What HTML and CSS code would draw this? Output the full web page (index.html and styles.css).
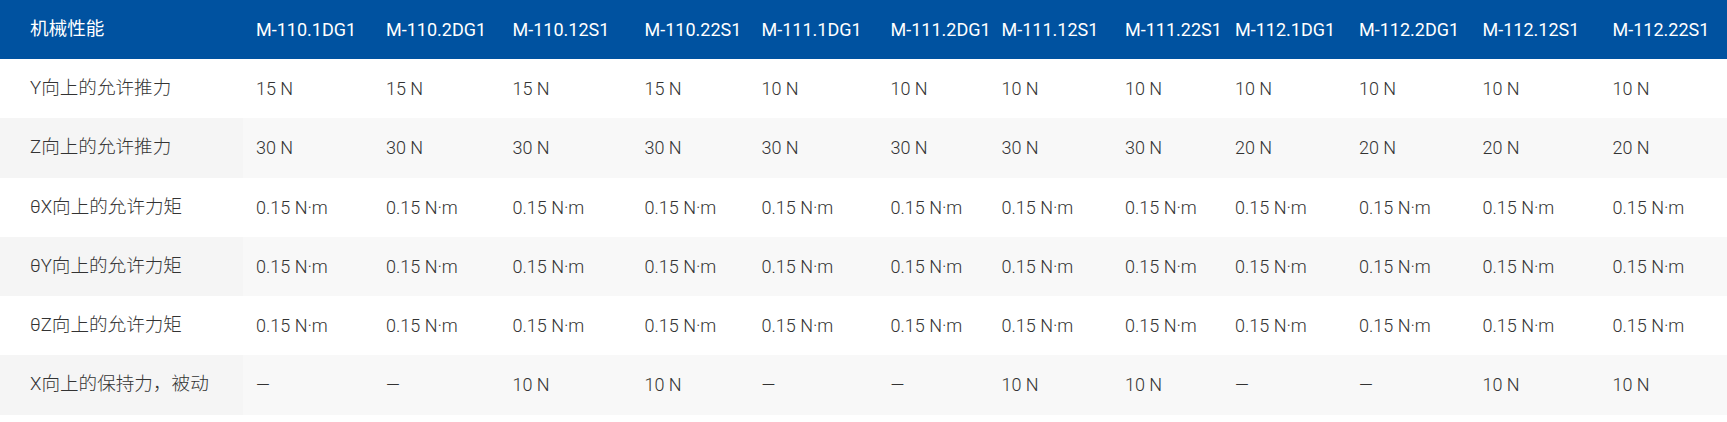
FILE: index.html
```html
<!DOCTYPE html>
<html lang="zh-CN">
<head>
<meta charset="utf-8">
<title>机械性能</title>
<link rel="stylesheet" href="styles.css">
</head>
<body>
<div class="spec-table" role="table">
  <div class="row head" role="row">
    <div class="cell label" role="columnheader">机械性能</div>
    <div class="cell" role="columnheader">M-110.1DG1</div>
    <div class="cell" role="columnheader">M-110.2DG1</div>
    <div class="cell" role="columnheader">M-110.12S1</div>
    <div class="cell" role="columnheader">M-110.22S1</div>
    <div class="cell" role="columnheader">M-111.1DG1</div>
    <div class="cell" role="columnheader">M-111.2DG1</div>
    <div class="cell" role="columnheader">M-111.12S1</div>
    <div class="cell" role="columnheader">M-111.22S1</div>
    <div class="cell" role="columnheader">M-112.1DG1</div>
    <div class="cell" role="columnheader">M-112.2DG1</div>
    <div class="cell" role="columnheader">M-112.12S1</div>
    <div class="cell" role="columnheader">M-112.22S1</div>
  </div>
  <div class="row" role="row">
    <div class="cell label" role="rowheader">Y向上的允许推力</div>
    <div class="cell" role="cell">15 N</div>
    <div class="cell" role="cell">15 N</div>
    <div class="cell" role="cell">15 N</div>
    <div class="cell" role="cell">15 N</div>
    <div class="cell" role="cell">10 N</div>
    <div class="cell" role="cell">10 N</div>
    <div class="cell" role="cell">10 N</div>
    <div class="cell" role="cell">10 N</div>
    <div class="cell" role="cell">10 N</div>
    <div class="cell" role="cell">10 N</div>
    <div class="cell" role="cell">10 N</div>
    <div class="cell" role="cell">10 N</div>
  </div>
  <div class="row alt" role="row">
    <div class="cell label" role="rowheader">Z向上的允许推力</div>
    <div class="cell" role="cell">30 N</div>
    <div class="cell" role="cell">30 N</div>
    <div class="cell" role="cell">30 N</div>
    <div class="cell" role="cell">30 N</div>
    <div class="cell" role="cell">30 N</div>
    <div class="cell" role="cell">30 N</div>
    <div class="cell" role="cell">30 N</div>
    <div class="cell" role="cell">30 N</div>
    <div class="cell" role="cell">20 N</div>
    <div class="cell" role="cell">20 N</div>
    <div class="cell" role="cell">20 N</div>
    <div class="cell" role="cell">20 N</div>
  </div>
  <div class="row" role="row">
    <div class="cell label" role="rowheader">θX向上的允许力矩</div>
    <div class="cell" role="cell">0.15 N·m</div>
    <div class="cell" role="cell">0.15 N·m</div>
    <div class="cell" role="cell">0.15 N·m</div>
    <div class="cell" role="cell">0.15 N·m</div>
    <div class="cell" role="cell">0.15 N·m</div>
    <div class="cell" role="cell">0.15 N·m</div>
    <div class="cell" role="cell">0.15 N·m</div>
    <div class="cell" role="cell">0.15 N·m</div>
    <div class="cell" role="cell">0.15 N·m</div>
    <div class="cell" role="cell">0.15 N·m</div>
    <div class="cell" role="cell">0.15 N·m</div>
    <div class="cell" role="cell">0.15 N·m</div>
  </div>
  <div class="row alt" role="row">
    <div class="cell label" role="rowheader">θY向上的允许力矩</div>
    <div class="cell" role="cell">0.15 N·m</div>
    <div class="cell" role="cell">0.15 N·m</div>
    <div class="cell" role="cell">0.15 N·m</div>
    <div class="cell" role="cell">0.15 N·m</div>
    <div class="cell" role="cell">0.15 N·m</div>
    <div class="cell" role="cell">0.15 N·m</div>
    <div class="cell" role="cell">0.15 N·m</div>
    <div class="cell" role="cell">0.15 N·m</div>
    <div class="cell" role="cell">0.15 N·m</div>
    <div class="cell" role="cell">0.15 N·m</div>
    <div class="cell" role="cell">0.15 N·m</div>
    <div class="cell" role="cell">0.15 N·m</div>
  </div>
  <div class="row" role="row">
    <div class="cell label" role="rowheader">θZ向上的允许力矩</div>
    <div class="cell" role="cell">0.15 N·m</div>
    <div class="cell" role="cell">0.15 N·m</div>
    <div class="cell" role="cell">0.15 N·m</div>
    <div class="cell" role="cell">0.15 N·m</div>
    <div class="cell" role="cell">0.15 N·m</div>
    <div class="cell" role="cell">0.15 N·m</div>
    <div class="cell" role="cell">0.15 N·m</div>
    <div class="cell" role="cell">0.15 N·m</div>
    <div class="cell" role="cell">0.15 N·m</div>
    <div class="cell" role="cell">0.15 N·m</div>
    <div class="cell" role="cell">0.15 N·m</div>
    <div class="cell" role="cell">0.15 N·m</div>
  </div>
  <div class="row alt" role="row">
    <div class="cell label" role="rowheader">X向上的保持力，被动</div>
    <div class="cell" role="cell">—</div>
    <div class="cell" role="cell">—</div>
    <div class="cell" role="cell">10 N</div>
    <div class="cell" role="cell">10 N</div>
    <div class="cell" role="cell">—</div>
    <div class="cell" role="cell">—</div>
    <div class="cell" role="cell">10 N</div>
    <div class="cell" role="cell">10 N</div>
    <div class="cell" role="cell">—</div>
    <div class="cell" role="cell">—</div>
    <div class="cell" role="cell">10 N</div>
    <div class="cell" role="cell">10 N</div>
  </div>
</div>
</body>
</html>
```
FILE: styles.css
```css
html, body {
  margin: 0;
  padding: 0;
  background: #ffffff;
}

body {
  font-family: Roboto, "Noto Sans CJK SC", "Liberation Sans", sans-serif;
  font-size: 18px;
  color: #333333;
}

.spec-table {
  width: 1727px;
  display: flex;
  flex-direction: column;
}

.row {
  display: grid;
  grid-template-columns: 243px 130px 126.5px 132px 117px 129px 111px 123.5px 110px 124px 123.5px 130px 1fr;
  height: 59.3px;
  align-items: center;
  background: #ffffff;
  font-weight: 300;
}

.row.head {
  height: 59px;
  background: #0052a0;
  color: #ffffff;
  font-weight: 400;
}

.row.alt {
  background: #f8f8f8;
}

.cell {
  padding-left: 13px;
  white-space: nowrap;
  line-height: 59px;
  height: 100%;
}

.cell.label {
  padding-left: 30px;
  font-size: 18.6px;
}

.row.alt .cell.label {
  background: #f5f5f5;
}
```
